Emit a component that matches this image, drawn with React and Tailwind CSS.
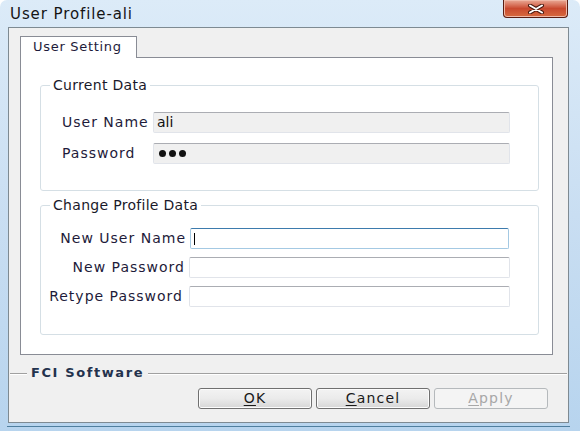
import React from 'react';

const font = "font-['DejaVu_Sans',Verdana,sans-serif]";

function Box({ children, readOnly, focused }) {
  const border = focused
    ? 'border-[#a4c9e3] border-t-[#3d7bad]'
    : 'border-[#e1e4ea] border-t-[#abadb3]';
  return (
    <div
      className={`h-[21px] flex items-center rounded-[2px] border ${border} ${
        readOnly ? 'bg-[#f0f0f0]' : 'bg-white'
      }`}
    >
      {children}
    </div>
  );
}

function Group({ title, children, className = '' }) {
  return (
    <div className={`relative rounded-[3px] border border-[#d5dfe5] bg-white ${className}`}>
      <span className="absolute left-[9px] top-[-9px] bg-white px-[3px] text-[14px] leading-[16px] tracking-[0.3px] text-[#1a1a2a]">
        {title}
      </span>
      {children}
    </div>
  );
}

function Button({ children, disabled }) {
  return (
    <button
      className={`w-[114px] h-[21px] rounded-[3px] border text-[14px] leading-[19px] tracking-[1.2px] ${
        disabled
          ? 'border-[#b5b9bc] bg-[#f4f4f4] text-[#a7a7a7]'
          : 'border-[#707070] bg-gradient-to-b from-[#f3f3f3] via-[#ebebeb] to-[#d6d6d6] text-[#1a1a1a] shadow-[inset_0_0_0_1px_#fcfcfc]'
      }`}
    >
      {children}
    </button>
  );
}

export default function App() {
  return (
    <div
      className={`${font} w-[580px] h-[431px] rounded-t-[7px] bg-gradient-to-b from-[#dcebf8] via-[#c9def2] to-[#b7d4ee] flex flex-col overflow-hidden`}
    >
      {/* Title bar */}
      <div className="h-[27px] flex justify-between">
        <span className="pl-[10px] pt-[6px] text-[15px] leading-[16px] tracking-[0.9px] text-[#141414]">
          User Profile-ali
        </span>
        <div className="mr-[12px] w-[65px] h-[18px] rounded-b-[4px] border border-t-0 border-[#5a1d12] bg-gradient-to-b from-[#e9a996] via-[#c9492f] to-[#d66a3f] flex items-center justify-center shadow-[inset_0_0_0_1px_#f0b8a6]">
          <svg width="20" height="10" viewBox="0 0 20 10">
            <path d="M4 1.5 L16 8.5 M16 1.5 L4 8.5" stroke="#4a1a10" strokeWidth="4" strokeLinecap="round" />
            <path d="M4 1.5 L16 8.5 M16 1.5 L4 8.5" stroke="#ffffff" strokeWidth="2" strokeLinecap="round" />
          </svg>
        </div>
      </div>

      {/* Client area */}
      <div className="ml-[8px] w-[561px] h-[396px] border border-[#7e8a92] bg-[#f0f0f0] flex flex-col">
        {/* Tabs */}
        <div className="pl-[11px] pt-[8px]">
          <div className="relative z-10 -mb-px w-[117px] h-[22px] border border-b-0 border-[#898c95] bg-white text-[13px] leading-[20px] tracking-[0.7px] text-[#1e1b3a] pl-[12px]">
            User Setting
          </div>
          <div className="w-[533px] border border-[#898c95] bg-white pt-[27px] pb-[19px] pl-[19px]">
            <Group title="Current Data" className="w-[499px] pt-[26px] pb-[26px]">
              <div className="flex flex-col gap-[10px] text-[14px] tracking-[1px] text-[#1e1b3a]">
                <div className="flex items-center">
                  <span className="pl-[21px] w-[112px]">User Name</span>
                  <div className="w-[357px]">
                    <Box readOnly>
                      <span className="pl-[3px] tracking-[0px] text-[#111]">ali</span>
                    </Box>
                  </div>
                </div>
                <div className="flex items-center">
                  <span className="pl-[21px] w-[112px]">Password</span>
                  <div className="w-[357px]">
                    <Box readOnly>
                      <span className="pl-[5px] flex gap-[3px]">
                        <span className="w-[7px] h-[7px] rounded-full bg-[#111]" />
                        <span className="w-[7px] h-[7px] rounded-full bg-[#111]" />
                        <span className="w-[7px] h-[7px] rounded-full bg-[#111]" />
                      </span>
                    </Box>
                  </div>
                </div>
              </div>
            </Group>

            <Group title="Change Profile Data" className="mt-[14px] w-[499px] pt-[22px] pb-[27px]">
              <div className="flex flex-col gap-[8px] text-[14px] tracking-[1px] text-[#1e1b3a]">
                <div className="flex items-center">
                  <span className="w-[145px] text-right">New User Name</span>
                  <div className="ml-[4px] w-[319px]">
                    <Box focused>
                      <span className="ml-[3px] w-px h-[12px] bg-black" />
                    </Box>
                  </div>
                </div>
                <div className="flex items-center">
                  <span className="w-[144px] text-right">New Password</span>
                  <div className="ml-[4px] w-[321px]">
                    <Box />
                  </div>
                </div>
                <div className="flex items-center">
                  <span className="w-[142px] text-right">Retype Password</span>
                  <div className="ml-[6px] w-[321px]">
                    <Box />
                  </div>
                </div>
              </div>
            </Group>
          </div>
        </div>

        {/* Footer group line */}
        <div className="relative mt-[18px] mx-px border-t border-[#a0a0a0] shadow-[0_1px_0_#ffffff]">
          <span className="absolute left-[17px] top-[-9px] bg-[#f0f0f0] px-[4px] text-[13px] leading-[16px] font-bold tracking-[1.6px] text-[#23324d]">
            FCI Software
          </span>
        </div>

        <div className="mt-[14px] pr-[20px] flex justify-end gap-[4px]">
          <Button>
            <span className="underline underline-offset-2">O</span>K
          </Button>
          <Button>
            <span className="underline underline-offset-2">C</span>ancel
          </Button>
          <Button disabled>
            <span className="underline underline-offset-2">A</span>pply
          </Button>
        </div>
      </div>

      <div className="ml-[7px] w-[563px] h-px bg-[#4f7e9e] mt-[3px]" />
    </div>
  );
}
